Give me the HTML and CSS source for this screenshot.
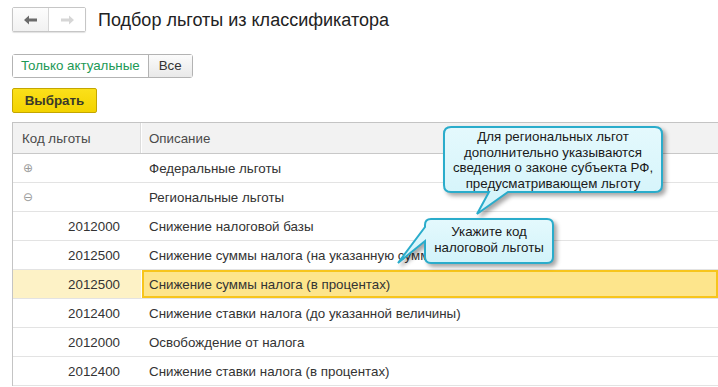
FILE: index.html
```html
<!DOCTYPE html>
<html lang="ru">
  <head>
    <meta charset="UTF-8" />
    <title>Подбор льготы из классификатора</title>
    <link rel="stylesheet" href="styles.css">
  </head>
  <body>
    <div class="page">
      <!-- шапка формы -->
      <div class="header">
        <div class="nav">
          <button class="nav-btn">
            <svg width="14" height="10" viewBox="0 0 14 10"><path d="M0 5 L5 0.5 V3.5 H13 V6.5 H5 V9.5 Z" fill="#6b6b6b"/></svg>
          </button>
          <button class="nav-btn disabled">
            <svg width="14" height="10" viewBox="0 0 14 10"><path d="M14 5 L9 0.5 V3.5 H1 V6.5 H9 V9.5 Z" fill="#d6d6d6"/></svg>
          </button>
        </div>
        <h1 class="title">Подбор льготы из классификатора</h1>
      </div>

      <!-- переключатель -->
      <div class="toggle">
        <div class="toggle-item active">Только актуальные</div>
        <div class="toggle-item">Все</div>
      </div>

      <div class="actions">
        <button class="btn-primary">Выбрать</button>
      </div>

      <!-- таблица -->
      <div class="grid">
        <div class="grid-head">
          <div class="cell code">Код льготы</div>
          <div class="cell desc">Описание</div>
        </div>
        <div class="row">
          <div class="cell code"><span class="tree">⊕</span></div>
          <div class="cell desc">Федеральные льготы</div>
        </div>
        <div class="row">
          <div class="cell code"><span class="tree">⊖</span></div>
          <div class="cell desc">Региональные льготы</div>
        </div>
        <div class="row">
          <div class="cell code num">2012000</div>
          <div class="cell desc">Снижение налоговой базы</div>
        </div>
        <div class="row">
          <div class="cell code num">2012500</div>
          <div class="cell desc">Снижение суммы налога (на указанную сумму)</div>
        </div>
        <div class="row selected">
          <div class="cell code num">2012500</div>
          <div class="cell desc">Снижение суммы налога (в процентах)</div>
        </div>
        <div class="row">
          <div class="cell code num">2012400</div>
          <div class="cell desc">Снижение ставки налога (до указанной величины)</div>
        </div>
        <div class="row">
          <div class="cell code num">2012000</div>
          <div class="cell desc">Освобождение от налога</div>
        </div>
        <div class="row">
          <div class="cell code num">2012400</div>
          <div class="cell desc">Снижение ставки налога (в процентах)</div>
        </div>
      </div>

      <!-- выноски -->
      <svg class="callouts" width="718" height="387" viewBox="0 0 718 387">
        <defs>
          <linearGradient id="fillG" x1="0" y1="0" x2="0" y2="1">
            <stop offset="0" stop-color="#e4f9fd"/>
            <stop offset="1" stop-color="#d2f3fa"/>
          </linearGradient>
        </defs>
        <path class="bubble" d="M451 127 H655 Q662 127 662 134 V185 Q662 192 655 192 H508 L477 214 L489 192 H451 Q444 192 444 185 V134 Q444 127 451 127 Z"/>
        <path class="bubble" d="M431 219 H547 Q553 219 553 225 V257 Q553 263 547 263 H431 Q425 263 425 257 V241 L398 263 L425 227 V225 Q425 219 431 219 Z"/>
      </svg>
      <div class="note note-big">Для региональных льгот<br>дополнительно указываются<br>сведения о законе субъекта РФ,<br>предусматривающем льготу</div>
      <div class="note note-small">Укажите код<br>налоговой льготы</div>
    </div>
  </body>
</html>
```

FILE: styles.css
```css
* {
  margin: 0;
  padding: 0;
  box-sizing: border-box;
}

body {
  font-family: "Liberation Sans", Arial, sans-serif;
  font-size: 13.33px;
  color: #333;
  background: #fff;
}

.page {
  position: relative;
  width: 718px;
  height: 387px;
  overflow: hidden;
}

/* шапка */
.header {
  display: flex;
  align-items: center;
  padding: 7px 12px 0;
  gap: 12px;
}

.nav {
  display: flex;
  border: 1px solid #c6c6c6;
  border-radius: 2px;
  box-shadow: 0 1px 1px rgba(0, 0, 0, 0.12);
}

.nav-btn {
  width: 36px;
  height: 23px;
  border: none;
  background: #fff;
  display: flex;
  align-items: center;
  justify-content: center;
}

.nav-btn:first-child {
  border-right: 1px solid #d6d6d6;
  background: linear-gradient(#fdfdfd, #f1f1f1);
}

.title {
  font-size: 18px;
  font-weight: normal;
  color: #222;
  line-height: 24px;
}

/* переключатель */
.toggle {
  display: flex;
  margin: 22px 0 0 12px;
  width: max-content;
  border: 1px solid #b3b3b3;
  border-radius: 3px;
  height: 24px;
}

.toggle-item {
  padding: 0 10px;
  line-height: 22px;
  background: linear-gradient(#fbfbfb, #e9e9e9);
}

.toggle-item.active {
  background: #fff;
  color: #1c9955;
  border-right: 1px solid #b3b3b3;
  padding: 0 8px 0 8px;
}

.actions {
  margin: 10px 0 0 12px;
}

.btn-primary {
  font-family: inherit;
  font-size: 13.33px;
  font-weight: bold;
  color: #3a3a2a;
  width: 85px;
  height: 25px;
  border: 1px solid #c4a600;
  border-radius: 2px;
  background: linear-gradient(#fbe01a, #f3d300);
}

/* таблица */
.grid {
  margin: 9px 0 0 12px;
  border-left: 1px solid #c4c4c4;
  border-top: 1px solid #c4c4c4;
}

.grid-head {
  display: flex;
  height: 31px;
  background: #f2f2f2;
  border-bottom: 1px solid #c8c8c8;
  color: #4a4a4a;
}

.grid-head .code {
  border-right: 1px solid #dcdcdc;
  box-shadow: 1px 0 0 #fff;
}

.cell {
  display: flex;
  align-items: center;
}

.code {
  width: 128px;
  flex-shrink: 0;
  padding-left: 9px;
}

.code.num {
  justify-content: flex-end;
  padding: 0 21px 0 0;
}

.desc {
  flex: 1;
  padding-left: 8px;
  white-space: nowrap;
}

.row {
  display: flex;
  height: 29px;
  border-bottom: 1px solid #e3e3e3;
}

.tree {
  color: #9a9a9a;
  font-size: 12px;
  font-family: "DejaVu Sans", sans-serif;
  margin-left: 1px;
}

.row.selected .code {
  background: #fdf2c6;
}

.row.selected .desc {
  background: #fde58c;
  border: 2px solid #f7c51c;
  margin-left: 1px;
  padding-left: 5px;
}

/* выноски */
.callouts {
  position: absolute;
  top: 0;
  left: 0;
  pointer-events: none;
}

.bubble {
  fill: url(#fillG);
  stroke: #2aaccb;
  stroke-width: 2;
  filter: drop-shadow(3px 3px 2px rgba(0, 0, 0, 0.35));
}

.note {
  position: absolute;
  text-align: center;
  color: #1a1a1a;
  font-size: 13.33px;
  line-height: 15.5px;
}

.note-big {
  left: 444px;
  top: 129px;
  width: 218px;
}

.note-small {
  left: 425px;
  top: 224px;
  width: 128px;
}
```
